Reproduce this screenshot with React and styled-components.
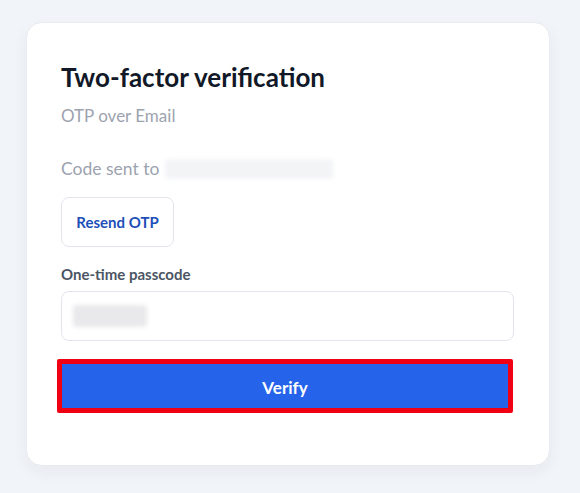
import React from "react";
import styled, { createGlobalStyle } from "styled-components";

const Global = createGlobalStyle`
  html, body { margin: 0; padding: 0; background: #f1f4f8; }
  body { font-family: "Lato", "Noto Sans", sans-serif; }
  * { box-sizing: border-box; }
`;

const Page = styled.div`
  width: 580px;
  height: 493px;
  padding: 22px 31px 28px 26px;
`;

const Card = styled.div`
  width: 524px;
  height: 444px;
  background: #ffffff;
  border-radius: 16px;
  border: 1px solid #e8ecf1;
  box-shadow: 0 6px 16px rgba(30, 41, 59, 0.05);
  padding: 38px 35px 0 34px;
  display: flex;
  flex-direction: column;
`;

const Title = styled.h1`
  margin: 0;
  font-size: 26px;
  line-height: 32px;
  font-weight: 700;
  color: #111827;
`;

const Subtitle = styled.p`
  margin: 11px 0 0;
  font-size: 17px;
  line-height: 24px;
  color: #9ca3af;
`;

const SentRow = styled.div`
  margin-top: 29px;
  display: flex;
  align-items: center;
  gap: 6px;
  font-size: 17.5px;
  line-height: 24px;
  color: #9ca3af;
`;

const Blur = styled.span`
  display: inline-block;
  width: ${(p) => p.$w}px;
  height: ${(p) => p.$h}px;
  background: ${(p) => p.$bg};
  filter: blur(2px);
  border-radius: 3px;
`;

const ResendButton = styled.button`
  margin-top: 16px;
  align-self: flex-start;
  width: 113px;
  height: 50px;
  background: #ffffff;
  border: 1px solid #e2e6ec;
  border-radius: 8px;
  font-family: inherit;
  font-size: 15px;
  font-weight: 700;
  color: #1e4fb8;
  cursor: pointer;
`;

const Label = styled.label`
  margin-top: 17px;
  font-size: 15px;
  line-height: 20px;
  font-weight: 700;
  color: #4b5563;
`;

const InputBox = styled.div`
  margin-top: 7px;
  height: 50px;
  border: 1px solid #e2e6ec;
  border-radius: 8px;
  display: flex;
  align-items: center;
  padding-left: 11px;
`;

const VerifyButton = styled.button`
  margin-top: 18px;
  margin-left: -4px;
  height: 54px;
  width: 456px;
  padding-top: 3px;
  background: #2563eb;
  border: 5px solid #f00012;
  border-radius: 2px;
  font-family: inherit;
  font-size: 17px;
  font-weight: 700;
  color: #ffffff;
  cursor: pointer;
`;

export default function App() {
  return (
    <>
      <Global />
      <Page>
        <Card>
          <Title>Two-factor verification</Title>
          <Subtitle>OTP over Email</Subtitle>
          <SentRow>
            Code sent to
            <Blur $w={168} $h={20} $bg="#f3f4f6" />
          </SentRow>
          <ResendButton>Resend OTP</ResendButton>
          <Label>One-time passcode</Label>
          <InputBox>
            <Blur $w={74} $h={22} $bg="#e9e9eb" />
          </InputBox>
          <VerifyButton>Verify</VerifyButton>
        </Card>
      </Page>
    </>
  );
}
